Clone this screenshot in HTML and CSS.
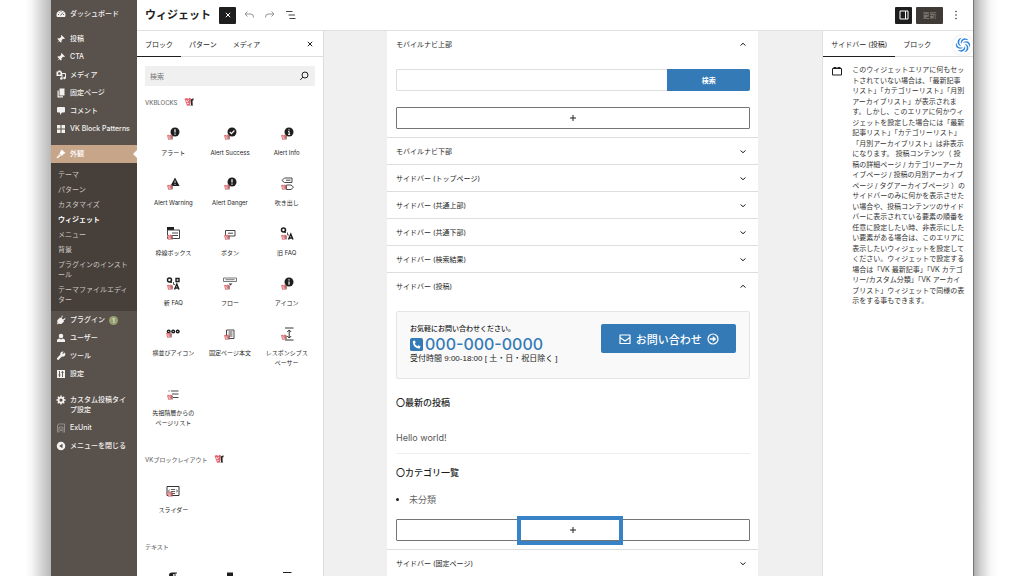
FILE: index.html
```html
<!DOCTYPE html>
<html lang="ja">
<head>
<meta charset="utf-8">
<meta name="viewport" content="width=device-width, initial-scale=1">
<title>ウィジェット</title>
<link rel="stylesheet" href="styles.css">
</head>
<body>
<svg class="sprite" aria-hidden="true">
  <symbol id="vk" viewBox="0 0 10 10">
    <path d="M.5 1.800 3.200 1l1 1.200L5.200.8l1.800.8-1 7-3 .2z" fill="#e2606a"/>
    <path d="M2 3l1.200 2.200L4.700 3M2.800 6.800l2-.4" stroke="#fff" stroke-width=".8" fill="none"/>
    <path d="M6.800 2.500 9.500 1.300v1.900l-1 .3.200 4.200.6.900H6.200l.8-.9z" fill="#222"/>
  </symbol>
  <symbol id="badge" viewBox="0 0 6 6">
    <path d="M0 1.200 1.700.8l.8.7L3.500.5l1.800.8-.8 4.200-3.300.2z" fill="#dd7378"/>
    <path d="M1.300 2.300l.8 1.500 1-1.500M1.800 4.600l1.800-.4" stroke="#fff" stroke-width=".5" fill="none"/>
    <path d="M4.600 2 5.800 1.400 5.600 5.600H4.500z" fill="#8b5557"/>
  </symbol>
  <symbol id="pin" viewBox="0 0 20 20"><path d="M11 2l7 7-2 1-2-.5-3 3 .3 3.500-1.800 1-3-3.200L2 18l4-5-3.200-3 1.200-1.700 3.500.2 3-3L10 3z" fill="currentColor"/></symbol>
  <symbol id="down" viewBox="0 0 10 10"><path d="M2.500 4.500 5 6.700 7.500 4.500" fill="none" stroke="#1e1e1e"/></symbol>
  <symbol id="up" viewBox="0 0 10 10"><path d="M2.500 6.500 5 4.300 7.500 6.500" fill="none" stroke="#1e1e1e"/></symbol>
  <symbol id="plus" viewBox="0 0 10 10"><path d="M5 2v6M2 5h6" fill="none" stroke="#1e1e1e" stroke-width="1"/></symbol>
  <symbol id="close" viewBox="0 0 10 10"><path d="M2.800 2.800l4.400 4.400M7.200 2.800 2.800 7.200" fill="none" stroke="currentColor"/></symbol>
  <symbol id="blade" viewBox="0 0 20 20"><path d="M7.500 9Q6 3.500 11.500 1.500 15 1.500 17 4.200 11.500 2.500 9.300 5.200 8 7 7.500 9z"/></symbol>
</svg>

<div class="window">
  <nav class="menu" aria-label="管理メニュー">
    <a class="menu-item" href="#"><svg viewBox="0 0 20 20"><path d="M2 16a9 9 0 1 1 16 0z" fill="currentColor"/><path d="M9 13l5-6M4 11h2M6 6l1 1M10 4v2M14 11h2" stroke="#59524c" stroke-width="1.800"/></svg>ダッシュボード</a>
    <div class="menu-gap"></div>
    <a class="menu-item" href="#"><svg><use href="#pin"/></svg>投稿</a>
    <a class="menu-item" href="#"><svg><use href="#pin"/></svg>CTA</a>
    <a class="menu-item" href="#"><svg viewBox="0 0 20 20"><path d="M1 3h3l1-2h4l1 2h2v9H1z" fill="currentColor"/><circle cx="6.500" cy="7" r="2.500" fill="#59524c"/><path d="M11 9V7h8v9M12 9v8" fill="none" stroke="currentColor" stroke-width="2"/><circle cx="10.500" cy="17" r="2.500" fill="currentColor"/><circle cx="17" cy="16" r="2.500" fill="currentColor"/></svg>メディア</a>
    <a class="menu-item" href="#"><svg viewBox="0 0 20 20"><path d="M7 1h10v14H7zM3 5h2.500v11.500H14V19H3z" fill="currentColor"/></svg>固定ページ</a>
    <a class="menu-item" href="#"><svg viewBox="0 0 20 20"><path d="M4 2h12q2 0 2 2v7q0 2-2 2h-4l-4 5v-5H4q-2 0-2-2V4q0-2 2-2z" fill="currentColor"/></svg>コメント</a>
    <a class="menu-item" href="#"><svg viewBox="0 0 20 20"><path d="M2 2h7v7H2zM11 2h7v7h-7zM2 11h7v7H2zM11 11h7v7h-7z" fill="currentColor"/></svg>VK Block Patterns</a>
    <div class="menu-gap"></div>
    <a class="menu-item current" href="#"><svg viewBox="0 0 20 20"><path d="M11 1l8 7-4 2-3 4-5-5zM6 10l4 4-3 1-4 4-2-2 4-4z" fill="currentColor"/></svg>外観</a>
    <div class="submenu">
      <a href="#">テーマ</a>
      <a href="#">パターン</a>
      <a href="#">カスタマイズ</a>
      <a class="here" href="#">ウィジェット</a>
      <a href="#">メニュー</a>
      <a href="#">背景</a>
      <a href="#">プラグインのインストール</a>
      <a href="#">テーマファイルエディター</a>
    </div>
    <a class="menu-item" href="#"><svg viewBox="0 0 20 20"><path d="M12 1l2 1-3 4 3 3 4-3 1 2-4 3 1 2-4 4q-4 2-6 0l-4 2 1-4q-2-3 1-6l4-4 2 1z" fill="currentColor"/></svg>プラグイン <span class="count">1</span></a>
    <a class="menu-item" href="#"><svg viewBox="0 0 20 20"><circle cx="10" cy="6" r="4.500" fill="currentColor"/><path d="M2 18v-4q1-3 5-3l3 2 3-2q4 0 5 3v4z" fill="currentColor"/></svg>ユーザー</a>
    <a class="menu-item" href="#"><svg viewBox="0 0 20 20"><path d="M17 3l-3 3-1.500-1.500L15.500 1.500q-5-1.500-7 3l.3 2.500-7 7.500q-.8 3.500 3 3.500L12 11q6 1.500 7-5z" fill="currentColor"/></svg>ツール</a>
    <a class="menu-item" href="#"><svg viewBox="0 0 20 20"><path d="M2 2h16v16H2z" fill="currentColor"/><path d="M7 4v12M13 4v12M5 12h4M11 7h4" stroke="#59524c" stroke-width="1.800"/></svg>設定</a>
    <div class="menu-gap"></div>
    <a class="menu-item tall" href="#"><svg viewBox="0 0 20 20"><circle cx="10" cy="10" r="5" fill="none" stroke="currentColor" stroke-width="3.500"/><path d="M10 1v4M10 15v4M1 10h4M15 10h4M3.600 3.600l3 3M13.400 13.400l3 3M16.400 3.600l-3 3M6.600 13.400l-3 3" stroke="currentColor" stroke-width="3"/></svg><span>カスタム投稿タイプ設定</span></a>
    <a class="menu-item" href="#"><svg viewBox="0 0 20 20"><path d="M3 19V4l3-2h11v17M6 19V8h8v11M8 12h4M8 15h4" fill="none" stroke="#a39d98" stroke-width="1.600"/></svg>ExUnit</a>
    <a class="menu-item" href="#"><svg viewBox="0 0 20 20"><circle cx="10" cy="10" r="8.500" fill="currentColor"/><path d="M13 5.500v9L6.500 10z" fill="#59524c"/></svg>メニューを閉じる</a>
  </nav>

  <div class="editor">
    <header class="topbar">
      <h1>ウィジェット</h1>
      <button class="square" aria-label="閉じる"><svg class="i10"><use href="#close"/></svg></button>
      <button class="tool" aria-label="元に戻す"><svg viewBox="0 0 12 12"><path d="M4.500 2.500 2 5l2.500 2.500M2 5h6q2.500 0 2.500 3.500" fill="none" stroke="#949494"/></svg></button>
      <button class="tool" aria-label="やり直す"><svg viewBox="0 0 12 12"><path d="M7.500 2.500 10 5 7.500 7.500M10 5H4Q1.500 5 1.500 8.500" fill="none" stroke="#949494"/></svg></button>
      <button class="tool" aria-label="リスト表示"><svg viewBox="0 0 12 12"><path d="M1 2.500h6.500M3.500 6h6.500M4.500 9.500h6" fill="none" stroke="#444"/></svg></button>
      <div class="spacer"></div>
      <button class="square" aria-label="設定"><svg class="i10" viewBox="0 0 10 10"><path d="M1 1h8v8H1zM6.500 1v8" fill="none" stroke="#fff"/></svg></button>
      <button class="update">更新</button>
      <button class="tool" aria-label="オプション"><svg viewBox="0 0 12 12" fill="#333"><circle cx="6" cy="2.500" r=".8"/><circle cx="6" cy="6" r=".8"/><circle cx="6" cy="9.500" r=".8"/></svg></button>
    </header>

    <div class="columns">
      <section class="inserter" aria-label="ブロックライブラリ">
        <div class="tabs">
          <button class="tab active">ブロック</button>
          <button class="tab">パターン</button>
          <button class="tab">メディア</button>
          <div class="spacer"></div>
          <button class="tabs-close" aria-label="閉じる"><svg class="i10"><use href="#close"/></svg></button>
        </div>
        <div class="library">
          <div class="search">
            <input type="search" aria-label="検索" placeholder="検索">
            <svg viewBox="0 0 12 12"><circle cx="7" cy="5" r="3" fill="none" stroke="#1e1e1e"/><path d="M4.800 7.200 2.300 9.900" stroke="#1e1e1e"/></svg>
          </div>

          <h2>VKBLOCKS <svg><use href="#vk"/></svg></h2>
          <div class="blocks">
            <button><svg viewBox="0 0 16 14"><circle cx="10" cy="5" r="4.500" fill="#1e1e1e"/><path d="M10 2.300v3.200M10 6.500v1.200" stroke="#fff" stroke-width="1.200"/><use href="#badge" x="2" y="7" width="6" height="6"/></svg>アラート</button>
            <button><svg viewBox="0 0 16 14"><circle cx="10" cy="5" r="4.500" fill="#1e1e1e"/><path d="M7.800 5l1.600 1.600L12.400 3.500" fill="none" stroke="#fff" stroke-width="1.100"/><use href="#badge" x="2" y="7" width="6" height="6"/></svg>Alert Success</button>
            <button><svg viewBox="0 0 16 14"><circle cx="10" cy="5" r="4.500" fill="#1e1e1e"/><path d="M10 2.200v1.200M9 4.600h1.200v3M9 7.400h2.200" fill="none" stroke="#fff"/><use href="#badge" x="2" y="7" width="6" height="6"/></svg>Alert Info</button>
            <button><svg viewBox="0 0 16 14"><path d="M10 .5l4.500 8.500h-9z" fill="#1e1e1e"/><path d="M10 3.500v2.700M10 7v1" stroke="#fff" stroke-width=".8"/><use href="#badge" x="2" y="7" width="6" height="6"/></svg>Alert Warning</button>
            <button><svg viewBox="0 0 16 14"><circle cx="10" cy="5" r="4.500" fill="#1e1e1e"/><path d="M10 2.300v3.200M10 6.500v1.200" stroke="#fff" stroke-width="1.200"/><use href="#badge" x="2" y="7" width="6" height="6"/></svg>Alert Danger</button>
            <button><svg viewBox="0 0 16 14"><path d="M5.500 1H13v4.500H5.500L3 3.500zM7 3.200h4.500M7.500 8H12l2.500 2.200L12 12.500H7.500z" fill="none" stroke="#333" stroke-width=".9"/><use href="#badge" x="2" y="7" width="6" height="6"/></svg>吹き出し</button>
            <button><svg viewBox="0 0 16 14"><path d="M2 0h7v3H2z" fill="#1e1e1e"/><path d="M2.500 3h12v8.500h-12zM7 6h6M7 8.500h6" fill="none" stroke="#333" stroke-width=".9"/><use href="#badge" x="2" y="7" width="6" height="6"/></svg>枠線ボックス</button>
            <button><svg viewBox="0 0 16 14"><path d="M3.500 3.500h9.500v5.500H3.500zM6 6.200h5" fill="none" stroke="#333" stroke-width=".9"/><use href="#badge" x="2" y="7" width="6" height="6"/></svg>ボタン</button>
            <button><svg viewBox="0 0 16 14"><circle cx="4.500" cy="3" r="2" fill="none" stroke="#1e1e1e" stroke-width="1.500"/><path d="M5 4l1.700 1.700M9.500 12.500l2.300-5.500L14 12.500M10.500 11h3" fill="none" stroke="#1e1e1e" stroke-width="1.400"/><path d="M8.500 5.500v2.500h1.500" fill="none" stroke="#555"/><use href="#badge" x="2" y="7" width="6" height="6"/></svg>旧 FAQ</button>
            <button><svg viewBox="0 0 16 14"><circle cx="4.500" cy="3" r="2" fill="none" stroke="#1e1e1e" stroke-width="1.500"/><path d="M5 4l1.700 1.700M9.500 12.500l2.300-5.500L14 12.500M10.500 11h3M11 1.500h3v3h-3z" fill="none" stroke="#1e1e1e" stroke-width="1.400"/><path d="M8.500 5v2.500h1.500" fill="none" stroke="#555"/><use href="#badge" x="2" y="7" width="6" height="6"/></svg>新 FAQ</button>
            <button><svg viewBox="0 0 16 14"><path d="M1.500 1h13v3.500h-13zM3.500 2.700h9" fill="none" stroke="#555" stroke-width=".8"/><path d="M6.500 6.500h4L8.500 8.500z" fill="#333"/><use href="#badge" x="2" y="7" width="6" height="6"/></svg>フロー</button>
            <button><svg viewBox="0 0 16 14"><circle cx="10" cy="5" r="4.500" fill="#1e1e1e"/><path d="M10 2.200v1.200M10 4.500v3.300" stroke="#fff" stroke-width="1.200"/><use href="#badge" x="2" y="7" width="6" height="6"/></svg>アイコン</button>
            <button><svg viewBox="0 0 16 14"><g fill="#fff" stroke="#1e1e1e" stroke-width="1.500"><circle cx="3.700" cy="4.500" r="1.300"/><circle cx="8.200" cy="4.500" r="1.300"/><circle cx="12.700" cy="4.500" r="1.300"/></g><use href="#badge" x="1" y="5" width="6" height="6"/></svg>横並びアイコン</button>
            <button><svg viewBox="0 0 16 14"><path d="M4.500 3h7.500v8.500H4.500zM6.500 5h4M6.500 7h4M7 9h3.500" fill="none" stroke="#333" stroke-width=".9"/><use href="#badge" x="2" y="7" width="6" height="6"/></svg>固定ページ本文</button>
            <button><svg viewBox="0 0 16 14"><path d="M6 1h8.500M6 13h8.500M10.200 3v8M8.200 5l2-2 2 2M8.200 9l2 2 2-2" fill="none" stroke="#1e1e1e" stroke-width=".9"/><use href="#badge" x="2" y="7" width="6" height="6"/></svg>レスポンシブスペーサー</button>
            <button><svg viewBox="0 0 16 14"><path d="M6 4h7.500M7 7h6.500M8 10.500h5.500M3.500 4h1.200" fill="none" stroke="#333" stroke-width=".9"/><use href="#badge" x="2" y="7" width="6" height="6"/></svg>先祖階層からのページリスト</button>
          </div>

          <h2>VKブロックレイアウト <svg><use href="#vk"/></svg></h2>
          <div class="blocks">
            <button><svg viewBox="0 0 16 14"><path d="M2 2.500h12v9H2z" fill="none" stroke="#333"/><path d="M4.700 5.500L3.500 7l1.200 1.500M11.300 5.500l1.200 1.500L11.300 8.500M6 5.500h4M6 7.500h4M7 9.500h3" fill="none" stroke="#333" stroke-width=".8"/><use href="#badge" x="2" y="7" width="6" height="6"/></svg>スライダー</button>
          </div>

          <h2>テキスト</h2>
          <div class="blocks">
            <button aria-label="段落"><svg viewBox="0 0 16 14"><path d="M12 1.500H7q-3 0-3 2.500t3 2.500V12h1.200V3h1.300v9h1V2.500H12z" fill="#1e1e1e"/></svg></button>
            <button aria-label="見出し"><svg viewBox="0 0 16 14"><path d="M5 1.500h6V12L8 9.500 5 12z" fill="#1e1e1e"/></svg></button>
            <button aria-label="リスト"><svg viewBox="0 0 16 14"><path d="M4 1.500h8.500M4 6h8.500M4 10h8.500" stroke="#1e1e1e"/></svg></button>
          </div>
        </div>
      </section>

      <main class="canvas">
        <div class="areas">
          <section class="area">
            <button class="area-title">モバイルナビ上部<svg><use href="#up"/></svg></button>
            <div class="area-body">
              <form class="site-search">
                <input type="text" aria-label="サイト内検索">
                <button type="button">検索</button>
              </form>
              <button class="appender" aria-label="ブロックを追加"><svg><use href="#plus"/></svg></button>
            </div>
          </section>
          <section class="area"><button class="area-title">モバイルナビ下部<svg><use href="#down"/></svg></button></section>
          <section class="area"><button class="area-title">サイドバー (トップページ)<svg><use href="#down"/></svg></button></section>
          <section class="area"><button class="area-title">サイドバー (共通上部)<svg><use href="#down"/></svg></button></section>
          <section class="area"><button class="area-title">サイドバー (共通下部)<svg><use href="#down"/></svg></button></section>
          <section class="area"><button class="area-title">サイドバー (検索結果)<svg><use href="#down"/></svg></button></section>
          <section class="area">
            <button class="area-title">サイドバー (投稿)<svg><use href="#up"/></svg></button>
            <div class="area-body">
              <div class="contact">
                <div class="contact-info">
                  <p>お気軽にお問い合わせください。</p>
                  <p class="phone"><svg viewBox="0 0 14 14"><rect width="14" height="14" rx="2" fill="#337ab7"/><path d="M3.200 3.300l2-.6 1 2.300-1.200 1q.9 2 2.900 3l1-1.200 2.400 1-.6 2q-.4.700-1.500.5Q3.700 10 3 4.500z" fill="#fff"/></svg>000-000-0000</p>
                  <p class="hours">受付時間 9:00-18:00 [ 土・日・祝日除く ]</p>
                </div>
                <a class="contact-button" href="#">
                  <svg viewBox="0 0 12 12"><path d="M1 2h10v8.500H1zM1 4.500l5 3.500 5-3.500" fill="none" stroke="#fff" stroke-width="1.200" stroke-linejoin="round"/></svg>
                  <span>お問い合わせ</span>
                  <svg viewBox="0 0 12 12"><circle cx="6" cy="6" r="5" fill="none" stroke="#fff" stroke-width="1.200"/><path d="M2.800 5.200h3V3l3.500 3-3.500 3V6.800h-3z" fill="#fff"/></svg>
                </a>
              </div>
              <h3>〇最新の投稿</h3>
              <p class="post"><a href="#">Hello world!</a></p>
              <h3 class="second">〇カテゴリ一覧</h3>
              <ul class="categories"><li><a href="#">未分類</a></li></ul>
              <div class="marked">
                <button class="appender" aria-label="ブロックを追加"><svg><use href="#plus"/></svg></button>
                <div class="marker"></div>
              </div>
            </div>
          </section>
          <section class="area"><button class="area-title">サイドバー (固定ページ)<svg><use href="#down"/></svg></button></section>
        </div>
      </main>

      <aside class="settings">
        <div class="tabs">
          <button class="tab active">サイドバー (投稿)</button>
          <button class="tab">ブロック</button>
        </div>
        <div class="swirl"><svg viewBox="0 0 20 20" fill="#2f86e0"><use href="#blade"/><use href="#blade" transform="rotate(60 10 10)"/><use href="#blade" transform="rotate(120 10 10)"/><use href="#blade" transform="rotate(180 10 10)"/><use href="#blade" transform="rotate(240 10 10)"/><use href="#blade" transform="rotate(300 10 10)"/></svg></div>
        <div class="description">
          <svg viewBox="0 0 12 12"><path d="M1.500 3.500h9v6.500h-9z" fill="none" stroke="#1e1e1e"/><path d="M2.500 2h3v1.500h-3zM6.500 2h3v1.500h-3z" fill="#1e1e1e"/></svg>
          <p>このウィジェットエリアに何もセッ<br>トされていない場合は、「最新記事<br>リスト」「カテゴリーリスト」「月別<br>アーカイブリスト」が表示されま<br>す。しかし、このエリアに何かウィ<br>ジェットを設定した場合には「最新<br>記事リスト」「カテゴリーリスト」<br>「月別アーカイブリスト」は非表示<br>になります。 投稿コンテンツ（ 投<br>稿の詳細ページ / カテゴリーアーカ<br>イブページ / 投稿の月別アーカイブ<br>ページ / タグアーカイブページ ）の<br>サイドバーのみに何かを表示させた<br>い場合や、投稿コンテンツのサイド<br>バーに表示されている要素の順番を<br>任意に設定したい時、非表示にした<br>い要素がある場合は、このエリアに<br>表示したいウィジェットを設定して<br>ください。ウィジェットで設定する<br>場合は「VK 最新記事」「VK カテゴ<br>リー/カスタム分類」「VK アーカイ<br>ブリスト」ウィジェットで同様の表<br>示をする事もできます。</p>
        </div>
      </aside>
    </div>
  </div>
</div>
</body>
</html>
```

FILE: styles.css
```css
* { box-sizing: border-box; }

body {
  margin: 0;
  padding: 0 50px 0 51px;
  color: #1e1e1e;
  font-family: Inter, "Noto Sans CJK JP", sans-serif;
  font-size: 7px;
  background:
    linear-gradient(to left, #b8b8b8, #d8d8d8 20%, #f6f6f6 38%, #fff 50%) left / 51px 100% no-repeat,
    linear-gradient(to right, #a8a8a8, #d4d4d4 16%, #f6f6f6 34%, #fff 50%) right / 51px 100% no-repeat,
    #fff;
}

button, input {
  margin: 0;
  padding: 0;
  border: 0;
  background: none;
  color: inherit;
  font: inherit;
}

h1, h2, h3, p, ul { margin: 0; padding: 0; }
a { color: inherit; text-decoration: none; }
svg { flex: none; display: block; }
.sprite { position: absolute; width: 0; height: 0; }
.i10 { width: 10px; height: 10px; }
.spacer { flex: 1; }

.window {
  display: flex;
  height: 100vh;
  overflow: hidden;
  background: #fff;
  border-right: 1px solid #777;
}

/* Admin menu */
.menu {
  flex: 0 0 86px;
  padding-top: 5px;
  background: #59524c;
  color: #f3f1f0;
  font-weight: 500;
}
.menu-item {
  position: relative;
  display: flex;
  align-items: center;
  gap: 4px;
  height: 18px;
  padding-left: 5px;
  line-height: 10px;
  white-space: nowrap;
}
.menu-item svg { width: 10px; height: 10px; }
.menu-item.tall { height: 29px; align-items: flex-start; padding: 5px 8px 0 5px; white-space: normal; }
.menu-gap { height: 7px; }
.current { background: #c7a589; color: #fff; }
.current::after {
  content: "";
  position: absolute;
  right: 0;
  border: 4px solid transparent;
  border-right-color: #fff;
  border-left: 0;
}
.submenu { padding: 4px 8px 4px 7px; background: #463f3a; color: #cbc7c3; font-weight: 400; }
.submenu a { display: block; padding: 3px 0 2px; line-height: 10px; }
.submenu .here { color: #fff; font-weight: 700; }
.count {
  width: 9px;
  height: 9px;
  border-radius: 50%;
  background: #96a06f;
  font-size: 6px;
  line-height: 9px;
  text-align: center;
}

/* Top bar */
.editor { flex: 1; min-width: 0; display: flex; flex-direction: column; }
.topbar {
  flex: none;
  display: flex;
  align-items: center;
  height: 31px;
  padding: 0 11px 0 8px;
  border-bottom: 1px solid #e0e0e0;
}
.topbar h1 { margin-right: 8px; font-size: 11px; line-height: 16px; font-weight: 600; }
.square {
  display: grid;
  place-items: center;
  width: 17px;
  height: 17px;
  border-radius: 1px;
  background: #1e1e1e;
  color: #fff;
}
.tool { margin-left: 9px; }
.square + .tool { margin-left: 7px; }
.tool svg { width: 12px; height: 12px; }
.update { width: 27px; height: 17px; margin-left: 4px; border-radius: 1px; background: #403a36; color: #908a85; }
.update + .tool { margin-left: 7px; }

.columns { flex: 1; min-height: 0; display: flex; }

/* Tabs */
.tabs { display: flex; height: 26px; border-bottom: 1px solid #ddd; }
.tab { height: 26px; padding: 0 8px; white-space: nowrap; }
.tab.active { border-bottom: 1px solid #1e1e1e; }
.tabs-close { padding-right: 8px; }

/* Inserter */
.inserter { flex: 0 0 187px; overflow: hidden; border-right: 1px solid #ddd; }
.library { padding: 9px 8px 0; }
.search { display: flex; align-items: center; height: 20px; padding: 0 5px; background: #f0f0f0; }
.search input { flex: 1; min-width: 0; outline: 0; }
.search input::placeholder { color: #757575; }
.search svg { width: 12px; height: 12px; }
.library h2 {
  display: flex;
  align-items: center;
  gap: 7px;
  height: 32px;
  color: #757575;
  font-size: 6px;
  font-weight: 500;
}
.library h2 svg { width: 10px; height: 10px; }
.blocks { display: grid; grid-template-columns: repeat(3, 1fr); padding-bottom: 5px; }
.blocks button {
  display: flex;
  flex-direction: column;
  align-items: center;
  gap: 7px;
  padding: 9px 5px 10px;
  font-size: 6px;
  line-height: 10px;
}
.blocks svg { width: 16px; height: 14px; }

/* Widget areas */
.canvas { flex: 1; min-width: 0; overflow: hidden; padding: 0 64px 0 63px; background: #f0f0f0; }
.areas { background: #fff; }
.area + .area { border-top: 1px solid #ddd; }
.area-title {
  display: flex;
  align-items: center;
  justify-content: space-between;
  width: 100%;
  height: 26px;
  padding: 0 10px 0 9px;
}
.area-title svg { width: 10px; height: 10px; }
.area-body { padding: 12px 8px 8px 9px; }
.site-search { display: flex; height: 22px; margin-bottom: 16px; }
.site-search input { flex: 1; min-width: 0; padding: 0 6px; border: 1px solid #ddd; border-right: 0; border-radius: 2px 0 0 2px; }
.site-search button { width: 83px; border-radius: 0 2px 2px 0; background: #337ab7; color: #fff; font-weight: 700; }
.appender { display: grid; place-items: center; width: 100%; height: 22px; border: 1px solid #757575; border-radius: 1px; }
.appender svg { width: 10px; height: 10px; }

.contact {
  display: flex;
  align-items: flex-start;
  justify-content: space-between;
  height: 68px;
  padding: 12px 13px;
  border: 1px solid #e5e5e5;
  border-radius: 2px;
  background: #f9f9f9;
  color: #222;
}
.contact-info { line-height: 10px; font-weight: 500; }
.phone { display: flex; align-items: center; gap: 2px; height: 20px; color: #337ab7; font-size: 16px; }
.phone svg { width: 13px; height: 13px; }
.hours { font-family: "Liberation Sans", "Noto Sans CJK JP", sans-serif; font-size: 8px; font-weight: 400; }
.contact-button {
  display: flex;
  align-items: center;
  justify-content: center;
  gap: 5px;
  width: 135px;
  height: 29px;
  border-radius: 2px;
  background: #337ab7;
  color: #fff;
  font-size: 11px;
  font-weight: 500;
}
.contact-button svg { width: 12px; height: 12px; }
.area h3 { margin-top: 16px; font-size: 9px; line-height: 16px; font-weight: 500; }
.post { margin-top: 20px; padding-bottom: 8px; border-bottom: 1px solid #eee; color: #555; font-size: 9px; line-height: 14px; }
.area h3.second { margin-top: 11px; }
.categories { margin: 12px 0; padding-left: 13px; font-size: 9px; line-height: 14px; }
.categories a { color: #666; }
.marked { position: relative; }
.marker { position: absolute; left: 121px; top: -3px; width: 106px; height: 29px; border: 4px solid #3882c8; }

/* Settings sidebar */
.settings { flex: 0 0 149px; position: relative; border-left: 1px solid #e0e0e0; }
.swirl {
  position: absolute;
  right: 0;
  top: 4px;
  display: grid;
  place-items: center;
  width: 20px;
  height: 20px;
  border-radius: 50%;
  background: #fff;
  box-shadow: 0 0 3px #ddd;
}
.swirl svg { width: 16px; height: 16px; }
.description { display: flex; gap: 9px; padding: 8px 8px 0; }
.description svg { width: 12px; height: 12px; }
.description p { line-height: 1.5; color: #333; white-space: nowrap; }
```
